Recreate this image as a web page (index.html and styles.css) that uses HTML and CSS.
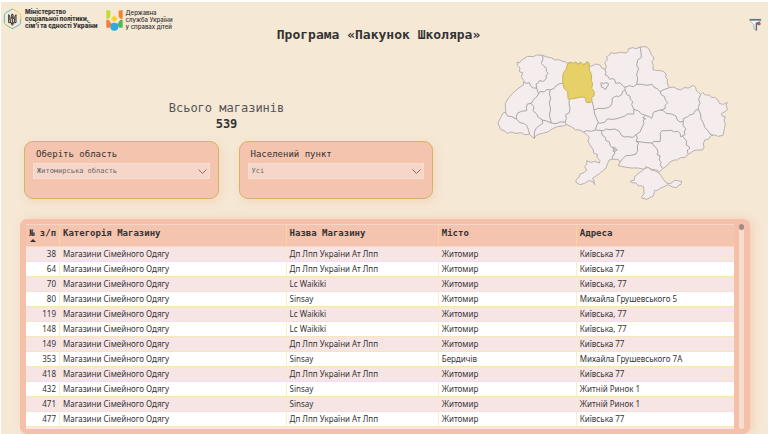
FILE: index.html
```html
<!DOCTYPE html>
<html lang="uk">
<head>
<meta charset="utf-8">
<title>Програма «Пакунок Школяра»</title>
<meta name="viewport" content="width=device-width, initial-scale=1">
<link rel="stylesheet" href="styles.css">
</head>
<body>
<header class="header">
  <div class="logos">
    <div class="logo">
      <svg class="logo-mark" width="19" height="22" viewBox="0 0 57 66" fill="none">
        <g stroke-width="3" stroke-linecap="round" stroke-linejoin="round">
          <path d="M28 3L9 14Q4 17 4 23V42" stroke="#5fb8c9"/>
          <path d="M4 42Q4 48 9 51L28 62" stroke="#8cc66e"/>
          <path d="M28 62L48 51Q53 48 53 42V33" stroke="#5fb8dd"/>
          <path d="M53 33V23Q53 17 48 14L28 3" stroke="#e9c94b"/>
        </g>
        <path d="M17 20v24h8c0 4 1 6 3 8c2-2 3-4 3-8h8V20c-5 4-4 10-3 15c-5-1-6-6-6-16h-4c0 10-1 15-6 16c1-5 2-11-3-15zM22 43v-8M28 25v24M34 43v-8" stroke="#333" stroke-width="3"/>
      </svg>
      <p class="logo-text logo-text-bold">Міністерство<br>соціальної політики,<br>сім’ї та єдності України</p>
    </div>
    <div class="logo logo-service">
      <svg class="logo-mark" width="17" height="22" viewBox="0 0 51 66">
        <path d="M1 3l12 2v17l-5 7H1z" fill="#c5d92d"/>
        <path d="M50 3L38 5v17l5 7h7z" fill="#f58232"/>
        <path d="M1 32h7l9 13-5 11H1z" fill="#f58232"/>
        <path d="M50 32h-7l-9 13 5 11h11z" fill="#52b95a"/>
        <path d="M25 20l9 9-9 9-9-9z" fill="#f8d02d" stroke="#f8d02d" stroke-width="2" stroke-linejoin="round"/>
        <circle cx="25" cy="53" r="12" fill="#32a8e0"/>
      </svg>
      <p class="logo-text">Державна<br>служба України<br>у справах дітей</p>
    </div>
  </div>
  <h1 class="title">Програма «Пакунок Школяра»</h1>
  <button class="filter-button" type="button" aria-label="Фільтр">
    <svg width="13" height="14" viewBox="0 0 39 42">
      <path d="M3 4h32v4L23 21v17l-8-5V21L3 8z" fill="#fafafa" stroke="#8b98a0" stroke-width="2"/>
      <path d="M2 3h34v5H2z" fill="#637782"/>
      <path d="M20 14l13-4-9 10v17h-4z" fill="#526b79"/>
      <circle cx="30" cy="17" r="5" fill="#a0605c"/>
    </svg>
  </button>
</header>

<section class="overview">
  <div class="controls">
    <div class="summary">
      <p class="summary-label">Всього магазинів</p>
      <p class="summary-value">539</p>
    </div>
    <div class="slicers">
      <div class="slicer">
        <label class="slicer-label" for="region">Оберіть область</label>
        <div class="slicer-field">
          <select class="slicer-select" id="region"><option>Житомирська область</option></select>
          <svg class="chevron" width="9" height="6" viewBox="0 0 9 6"><path d="M.5 .5l4 4 4-4"/></svg>
        </div>
      </div>
      <div class="slicer">
        <label class="slicer-label" for="city">Населений пункт</label>
        <div class="slicer-field">
          <select class="slicer-select" id="city"><option>Усі</option></select>
          <svg class="chevron" width="9" height="6" viewBox="0 0 9 6"><path d="M.5 .5l4 4 4-4"/></svg>
        </div>
      </div>
    </div>
  </div>
  <svg class="map" viewBox="0 0 735 495" role="img" aria-label="Карта областей України">
    <path class="land" d="M82 66L88 69 93 62 105 54 112 49 130 50 140 45 157 46 168 50 185 54 195 60 206 59 215 63 226 66 233 70 240 67 250 70 258 66 262 72 270 68 276 76 284 73 290 66 296 70 299 80 305 78 318 72 330 75 335 84 345 88 349 80 344 68 352 60 350 50 358 46 362 38 375 40 392 37 408 39 414 34 416 26 428 23 438 26 450 21 468 20 476 26 480 34 484 45 492 52 489 61 485 66 490 76 488 88 496 91 510 92 520 94 528 102 527 112 532 118 532 132 538 143 550 141 560 146 572 150 582 143 596 144 610 136 617 142 619 152 626 158 632 164 638 158 646 165 658 165 664 173 674 172 684 180 689 191 700 193 712 187 708 196 713 208 705 215 694 221 698 230 706 230 702 240 706 252 703 266 699 286 685 289 670 284 661 289 656 297 644 300 640 312 642 322 637 330 622 330 612 332 598 341 590 346 586 352 572 353 562 360 552 360 540 366 530 378 518 386 508 396 500 390 486 388 468 380 462 388 445 384 425 384 408 382 385 377 390 366 384 358 368 358 358 360 352 372 348 384 338 392 330 400 318 408 308 414 312 424 314 434 308 424 296 422 284 430 270 434 258 427 258 419 268 411 270 402 282 398 290 390 284 380 291 372 290 362 302 367 315 364 328 369 330 362 321 352 322 343 312 340 309 328 298 312 294 302 298 292 290 284 280 276 270 270 256 269 244 260 230 254 218 258 202 260 188 266 175 275 158 280 145 283 136 289 133 295 125 289 118 283 104 284 94 278 78 280 62 276 52 280 42 272 32 268 24 250 28 240 34 230 38 220 47 216 46 190 56 174 68 160 82 147 100 135 102 122 94 110 98 98 88 95 90 84 82 76z"/>
    <path class="land" d="M420 424L433 420 434 411 442 402 455 394 464 386 474 382 484 390 497 393 508 400 518 415 530 430 543 430 555 420 566 423 575 424 573 433 567 435 560 443 548 441 535 434 522 440 510 445 503 451 494 451 490 468 478 474 470 478 456 474 455 469 462 462 461 440 452 437 446 438 438 429 426 428z"/>
    <g class="borders">
      <path d="M157 46L159 58 154 70 161 78 169 84 169 94 174 100 168 108 169 116 160 124 148 122 144 129 138 132 140 144M100 126L110 130 118 128 122 138 130 144 140 144 143 155 146 162 138 172 130 180 124 190 112 192 109 202 110 212 94 214 82 220 79 230 80 238M46 216L53 228 66 230 80 238 90 248 103 251 112 260 116 272 119 283M146 162L150 154 162 156 170 149 181 149 192 146 197 138 206 132 218 130M181 149L178 161 182 174 178 189 182 208 178 225 184 249M122 190L132 200 129 212 140 222 145 232 157 240 158 250 148 257 139 264 133 276 133 295M157 240L170 243 184 249 198 251 210 246 225 246 229 236 227 224 238 218 240 206 237 190 238 178M225 246L230 254"/>
      <path d="M306 184L310 198 312 211 314 222 320 236 325 248 320 256 316 270 304 274 290 272 280 276M312 211L323 205 338 206 354 203 362 198 367 186 366 176 374 170 380 168 385 170 395 164 398 154 405 150M345 88L348 98 345 104 354 109 359 118 367 116 374 119 377 130 390 128 397 136 405 142 405 150M405 142L418 137 430 140 440 133 443 116 440 102 446 86 440 76 443 60 454 52 453 36 450 21M440 133L458 133 470 136 486 133 492 142 502 146 510 155 524 148 538 143"/>
      <path d="M405 150L411 164 420 168 421 178 428 184 425 194 432 208 431 222 412 222 405 228 384 235 370 238 352 237 346 246 330 250 325 248M432 208L446 213 454 222 466 226 478 230 484 235 488 228 490 217 501 213 510 210 520 212 528 220 545 222 558 228 562 240 570 246 580 244M510 155L514 164 524 170 526 180 533 188 526 196 525 206 512 210M632 164L626 178 630 190 625 200 625 209 617 210 610 222 600 224 592 231 580 236 580 244M625 209L632 222 633 238 640 248 644 262 654 272 660 282 670 287M316 270L340 272 348 267 360 269 375 267 388 274 394 286 404 291 414 290 428 292 438 284 450 276 455 264 462 250 459 242 467 236 458 234 466 226M438 284L442 294 438 304"/>
      <path d="M334 272L337 286 346 292 348 302 358 306 361 318 370 324 370 336 376 330 370 322 373 321 382 330 375 334 372 345 366 350 368 358M438 304L446 308 442 318 443 332 438 342 424 346 408 347 398 356 390 366M438 304L454 306 468 308 486 309 492 304 510 305 512 292 510 280 516 272 530 272 545 271 553 276 564 274 570 280 572 290 577 288 585 284 583 276 587 266 579 256 580 244M577 288L584 296 590 304 588 314 595 318 600 324 592 330 594 341M486 309L492 318 500 325 504 336 501 344 510 347 508 360 514 368 510 374 518 386M333 128L340 131 346 128 355 130 354 139 350 141 347 149 341 144 334 141z"/>
    </g>
    <path class="selected" d="M233 70L241 69 245 66 250 71 258 66 264 74 273 66 278 73 288 72 292 65 298 70 297 80 300 95 305 104 304 121 308 132 305 145 313 155 312 168 305 172 306 184 300 188 289 187 285 172 276 171 238 178 234 176 233 155 222 145 218 127 218 108 221 98 228 88z"/>
  </svg>
</section>

<main class="panel">
  <div class="table-view">
    <table class="shops">
      <colgroup><col class="col-number"><col class="col-category"><col class="col-name"><col class="col-city"><col></colgroup>
      <thead>
        <tr><th class="number" aria-sort="ascending">№ з/п</th><th>Категорія Магазину</th><th>Назва Магазину</th><th>Місто</th><th>Адреса</th></tr>
      </thead>
      <tbody>
        <tr><td>38</td><td>Магазини Сімейного Одягу</td><td>Дп Лпп України Ат Лпп</td><td>Житомир</td><td>Київська 77</td></tr>
        <tr><td>64</td><td>Магазини Сімейного Одягу</td><td>Дп Лпп України Ат Лпп</td><td>Житомир</td><td>Київська 77</td></tr>
        <tr><td>70</td><td>Магазини Сімейного Одягу</td><td>Lc Waikiki</td><td>Житомир</td><td>Київська, 77</td></tr>
        <tr><td>80</td><td>Магазини Сімейного Одягу</td><td>Sinsay</td><td>Житомир</td><td>Михайла Грушевського 5</td></tr>
        <tr><td>119</td><td>Магазини Сімейного Одягу</td><td>Lc Waikiki</td><td>Житомир</td><td>Київська, 77</td></tr>
        <tr><td>148</td><td>Магазини Сімейного Одягу</td><td>Lc Waikiki</td><td>Житомир</td><td>Київська, 77</td></tr>
        <tr><td>149</td><td>Магазини Сімейного Одягу</td><td>Дп Лпп України Ат Лпп</td><td>Житомир</td><td>Київська 77</td></tr>
        <tr><td>353</td><td>Магазини Сімейного Одягу</td><td>Sinsay</td><td>Бердичів</td><td>Михайла Грушевського 7А</td></tr>
        <tr><td>418</td><td>Магазини Сімейного Одягу</td><td>Дп Лпп України Ат Лпп</td><td>Житомир</td><td>Київська 77</td></tr>
        <tr><td>432</td><td>Магазини Сімейного Одягу</td><td>Sinsay</td><td>Житомир</td><td>Житній Ринок 1</td></tr>
        <tr><td>471</td><td>Магазини Сімейного Одягу</td><td>Sinsay</td><td>Житомир</td><td>Житній Ринок 1</td></tr>
        <tr><td>477</td><td>Магазини Сімейного Одягу</td><td>Дп Лпп України Ат Лпп</td><td>Житомир</td><td>Київська 77</td></tr>
      </tbody>
    </table>
  </div>
  <div class="scroll-track"><div class="scroll-thumb"></div></div>
</main>
</body>
</html>
```
FILE: styles.css
```css
* {
  box-sizing: border-box;
}

body {
  margin: 0;
  min-height: 100vh;
  border-top: 2px solid #fff;
  border-left: 1px solid #fff;
  background: #f5e8d5;
  color: #333;
  font-family: "Noto Sans", "Open Sans", sans-serif;
  font-size: 8px;
}

p,
h1 {
  margin: 0;
}

.header {
  display: grid;
  grid-template-columns: 1fr auto 1fr;
  height: 42px;
  padding: 6px 6px 2px 2px;
}

.logos {
  display: flex;
  gap: 8px;
}

.logo {
  display: flex;
  align-items: flex-start;
  gap: 3px;
}

.logo-mark {
  flex: none;
}

.logo-service {
  padding-top: 1px;
}

.logo-text {
  font: 500 6px/7px Inter, sans-serif;
  white-space: nowrap;
}

.logo-text-bold {
  font-weight: 800;
}

.title {
  align-self: end;
  margin-right: 8px;
  font: bold 13px/15px "DejaVu Sans Mono", monospace;
}

.filter-button {
  justify-self: end;
  align-self: start;
  display: flex;
  margin-top: 10px;
  padding: 0;
  border: 0;
  background: none;
}

.overview {
  display: flex;
  gap: 57px;
  padding: 0 33px 0 23px;
}

.controls {
  flex: 409;
  min-width: 0;
  padding-top: 56px;
}

.summary {
  padding-right: 4px;
  font: 12px/16px "DejaVu Sans Mono", monospace;
  text-align: center;
}

.summary-label {
  color: #555;
}

.summary-value {
  font-weight: bold;
}

.slicers {
  display: grid;
  grid-template-columns: 1fr 1fr;
  gap: 20px;
  margin-top: 9px;
}

.slicer {
  height: 58px;
  padding: 5px 8px;
  border: 1px solid #d4b463;
  border-radius: 9px;
  background: #f4c4ae;
  box-shadow: 2px 3px 8px rgba(244, 180, 150, 0.35);
}

.slicer-label {
  display: block;
  padding-left: 3px;
  font: 9px/14px "DejaVu Sans Mono", monospace;
}

.slicer-field {
  position: relative;
  margin-top: 2px;
}

.slicer-select {
  display: block;
  width: 100%;
  height: 16px;
  padding: 0 16px 0 3px;
  border: 1px solid #f7dcd2;
  border-radius: 0;
  background: #f7d6ca;
  color: #666;
  font: 7px "DejaVu Sans Mono", monospace;
  appearance: none;
}

.chevron {
  position: absolute;
  top: 6px;
  right: 3px;
  fill: none;
  stroke: #82706a;
  pointer-events: none;
}

.map {
  flex: 245;
  min-width: 0;
  align-self: flex-start;
  margin-top: -4px;
}

.land {
  fill: #f5ecee;
  stroke: #b8b2b0;
  stroke-width: 3;
}

.borders {
  fill: none;
  stroke: #aaa6a7;
  stroke-width: 3;
}

.selected {
  fill: #e7d067;
  stroke: #c9b662;
  stroke-width: 3;
}

.panel {
  display: flex;
  gap: 5px;
  height: 215px;
  margin: 14px 18px 0 19px;
  padding: 5px 6px;
  border-radius: 7px;
  background: #f4c0aa;
  box-shadow: 3px 0 9px rgba(244, 180, 150, 0.45);
}

.table-view {
  flex: 1;
  overflow: hidden;
  border-top: 1px solid #f7d6ca;
  background: #f7e5e5;
}

.shops {
  width: 100%;
  table-layout: fixed;
  border-collapse: separate;
  border-spacing: 0;
}

.col-number {
  width: 34px;
}

.col-category {
  width: 32%;
}

.col-name {
  width: 21.5%;
}

.col-city {
  width: 19.5%;
}

.shops th {
  position: relative;
  height: 22px;
  padding: 1px 3px 0;
  border-right: 1px solid #f6d59f;
  border-bottom: 1px solid #f7d6ca;
  background: #f4c4ae;
  font: bold 9px/14px "DejaVu Sans Mono", monospace;
  text-align: left;
  vertical-align: top;
  white-space: nowrap;
}

.shops .number::after {
  content: "";
  position: absolute;
  left: 4px;
  bottom: 4px;
  border: 3px solid transparent;
  border-top: 0;
  border-bottom-color: #333;
}

.shops td {
  height: 15px;
  padding: 0 3px;
  border-right: 1px solid #f8edc9;
  border-bottom: 1px solid #f6e7b9;
  line-height: 14px;
  white-space: nowrap;
}

.shops td:first-child {
  text-align: right;
}

.shops th:last-child,
.shops td:last-child {
  border-right: 0;
}

.shops tbody tr:nth-child(even) {
  background: #fff;
}

.scroll-track {
  width: 5px;
  border-radius: 3px;
  background: #f8ddd3;
}

.scroll-thumb {
  width: 5px;
  height: 6px;
  border-radius: 3px;
  background: #a28b82;
}
```
